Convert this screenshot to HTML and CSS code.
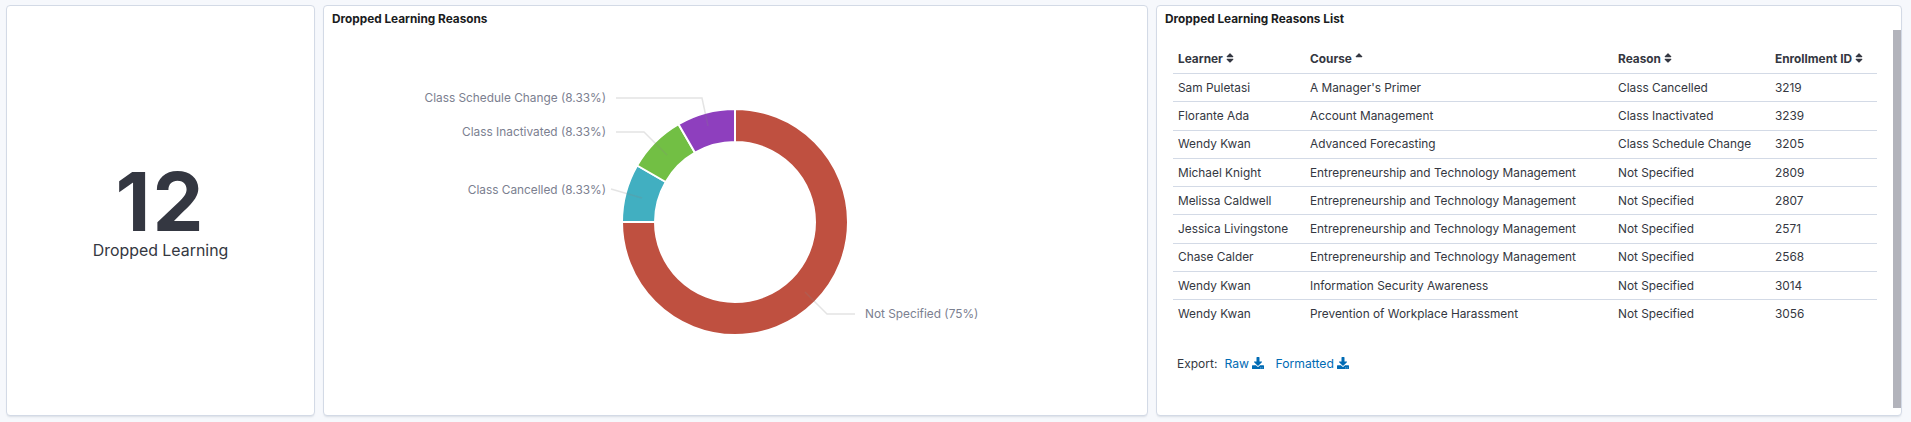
FILE: index.html
```html
<!DOCTYPE html>
<html lang="en">
<head>
    <meta charset="UTF-8">
    <title>Dropped Learning</title>
    <link rel="stylesheet" href="styles.css">
</head>
<body>
    <svg class="defs" width="0" height="0">
        <symbol id="sort" viewBox="0 0 320 512"><path d="M41 288h238c21.4 0 32.1 25.9 17 41L177 448c-9.4 9.4-24.6 9.4-33.9 0L24 329c-15.1-15.1-4.4-41 17-41zm255-105L177 64c-9.4-9.4-24.6-9.4-33.9 0L24 183c-15.1 15.1-4.4 41 17 41h238c21.4 0 32.1-25.9 17-41z"/></symbol>
        <symbol id="sort-up" viewBox="0 0 320 512"><path d="M296 183L177 64c-9.4-9.4-24.6-9.4-33.9 0L24 183c-15.1 15.1-4.4 41 17 41h238c21.4 0 32.1-25.9 17-41z"/></symbol>
        <symbol id="download" viewBox="0 0 512 512"><path d="M216 0h80c13.3 0 24 10.7 24 24v168h87.7c17.8 0 26.7 21.5 14.1 34.1L269.7 378.3c-7.5 7.5-19.8 7.5-27.3 0L90.1 226.1c-12.6-12.6-3.7-34.1 14.1-34.1H192V24c0-13.3 10.7-24 24-24zm296 376v112c0 13.3-10.7 24-24 24H24c-13.3 0-24-10.7-24-24V376c0-13.3 10.7-24 24-24h146.7l49 49c20.1 20.1 52.5 20.1 72.6 0l49-49H488c13.3 0 24 10.7 24 24zm-124 88c0-11-9-20-20-20s-20 9-20 20 9 20 20 20 20-9 20-20zm64 0c0-11-9-20-20-20s-20 9-20 20 9 20 20 20 20-9 20-20z"/></symbol>
    </svg>

    <div class="dashboard">
        <section class="panel panel-metric">
            <div class="metric-value">12</div>
            <div class="metric-label">Dropped Learning</div>
        </section>

        <section class="panel panel-chart">
            <h2 class="panel-title">Dropped Learning Reasons</h2>
            <!-- viewBox uses page coordinates so the slices are easy to check -->
            <svg class="donut" viewBox="324 30 823 384">
                <path class="slice-red" d="M735 109A113 113 0 1 1 622 222L655 222A80 80 0 1 0 735 142Z"/>
                <path class="slice-teal" d="M622 222A113 113 0 0 1 637.14 165.5L665.72 182A80 80 0 0 0 655 222Z"/>
                <path class="slice-green" d="M637.14 165.5A113 113 0 0 1 678.5 124.14L695 152.72A80 80 0 0 0 665.72 182Z"/>
                <path class="slice-purple" d="M678.5 124.14A113 113 0 0 1 735 109L735 142A80 80 0 0 0 695 152.72Z"/>
                <polyline class="leader" points="616,98 702,98 708,126"/>
                <polyline class="leader" points="616,132 644,132 667,155"/>
                <polyline class="leader" points="611,189 642,198"/>
                <polyline class="leader" points="855,314 827,314 805,292"/>
                <text class="label" x="606" y="102" text-anchor="end">Class Schedule Change (8.33%)</text>
                <text class="label" x="606" y="136" text-anchor="end">Class Inactivated (8.33%)</text>
                <text class="label" x="606" y="194" text-anchor="end">Class Cancelled (8.33%)</text>
                <text class="label" x="865" y="318">Not Specified (75%)</text>
            </svg>
        </section>

        <section class="panel panel-list">
            <h2 class="panel-title">Dropped Learning Reasons List</h2>
            <div class="list-wrap">
                <div class="list-body">
                    <table class="reasons">
                        <colgroup>
                            <col class="col-learner">
                            <col class="col-course">
                            <col class="col-reason">
                            <col class="col-id">
                        </colgroup>
                        <thead>
                            <tr>
                                <th>Learner <svg class="sort-icon"><use href="#sort"/></svg></th>
                                <th>Course <svg class="sort-icon"><use href="#sort-up"/></svg></th>
                                <th>Reason <svg class="sort-icon"><use href="#sort"/></svg></th>
                                <th>Enrollment ID <svg class="sort-icon"><use href="#sort"/></svg></th>
                            </tr>
                        </thead>
                        <tbody>
                            <tr><td>Sam Puletasi</td><td>A Manager's Primer</td><td>Class Cancelled</td><td>3219</td></tr>
                            <tr><td>Florante Ada</td><td>Account Management</td><td>Class Inactivated</td><td>3239</td></tr>
                            <tr><td>Wendy Kwan</td><td>Advanced Forecasting</td><td>Class Schedule Change</td><td>3205</td></tr>
                            <tr><td>Michael Knight</td><td>Entrepreneurship and Technology Management</td><td>Not Specified</td><td>2809</td></tr>
                            <tr><td>Melissa Caldwell</td><td>Entrepreneurship and Technology Management</td><td>Not Specified</td><td>2807</td></tr>
                            <tr><td>Jessica Livingstone</td><td>Entrepreneurship and Technology Management</td><td>Not Specified</td><td>2571</td></tr>
                            <tr><td>Chase Calder</td><td>Entrepreneurship and Technology Management</td><td>Not Specified</td><td>2568</td></tr>
                            <tr><td>Wendy Kwan</td><td>Information Security Awareness</td><td>Not Specified</td><td>3014</td></tr>
                            <tr><td>Wendy Kwan</td><td>Prevention of Workplace Harassment</td><td>Not Specified</td><td>3056</td></tr>
                        </tbody>
                    </table>
                    <div class="export">
                        <span class="export-label">Export:</span>
                        <a class="export-link">Raw <svg class="download-icon"><use href="#download"/></svg></a>
                        <a class="export-link">Formatted <svg class="download-icon"><use href="#download"/></svg></a>
                    </div>
                </div>
                <div class="scrollbar"></div>
            </div>
        </section>
    </div>
</body>
</html>
```

FILE: styles.css
```css
body {
    margin: 0;
    background-color: #f6f8fc;
    color: #343741;
    font-family: Inter, "Noto Sans", sans-serif;
}
.defs {
    position: absolute;
}
.dashboard {
    display: flex;
    gap: 8px;
    height: 411px;
    padding: 5px 9px 6px 6px;
}
.panel {
    flex: none;
    box-sizing: border-box;
    background-color: white;
    border: 1px solid #d3dae6;
    border-radius: 4px;
    box-shadow: 0 2px 2px -1px rgba(152, 162, 179, 0.3);
    overflow: hidden;
}
.panel-title {
    margin: 0;
    padding: 5px 8px 3px;
    height: 16px;
    line-height: 16px;
    font-size: 11.8px;
    font-weight: 700;
    color: #1a1c21;
}

/* metric */
.panel-metric {
    width: 309px;
    display: flex;
    flex-direction: column;
    align-items: center;
    justify-content: center;
}
.metric-value {
    font-size: 81px;
    line-height: 78px;
    letter-spacing: 2px;
    font-weight: 700;
    margin-top: 3px;
}
.metric-label {
    font-size: 15.9px;
    line-height: 20px;
}

/* donut */
.panel-chart {
    width: 825px;
}
.donut {
    display: block;
    width: 823px;
    height: 384px;
}
.donut path {
    stroke: white;
    stroke-width: 2;
}
.slice-red { fill: #bf5040; }
.slice-teal { fill: #41afc1; }
.slice-green { fill: #72bf44; }
.slice-purple { fill: #8e3fbe; }
.leader {
    fill: none;
    stroke: rgba(130, 130, 130, 0.22);
    stroke-width: 1.5;
}
.label {
    font-size: 11.85px;
    fill: #7b8090;
}

/* list */
.panel-list {
    width: 746px;
}
.list-wrap {
    display: flex;
    height: 385px;
}
.list-body {
    flex: 1;
    padding: 15px 15px 0 16px;
}
.scrollbar {
    width: 8px;
    height: 378px;
    background-color: #b2b3bb;
}
.reasons {
    width: 704px;
    table-layout: fixed;
    border-collapse: collapse;
    font-size: 11.85px;
}
.col-learner { width: 132px; }
.col-course { width: 308px; }
.col-reason { width: 157px; }
.col-id { width: 107px; }
.reasons th {
    text-align: left;
    font-weight: 700;
    height: 28px;
    padding: 0 5px;
    border-bottom: 1px solid #d3dae6;
}
.reasons td {
    height: 27.3px;
    padding: 0 5px;
    border-bottom: 1px solid #d3dae6;
}
.reasons tbody tr:last-child td {
    border-bottom: none;
}
.sort-icon {
    width: 8px;
    height: 12px;
    fill: #343741;
    vertical-align: -1px;
}
.export {
    display: flex;
    align-items: center;
    font-size: 12px;
    margin-top: 28px;
    padding-left: 4px;
}
.export-label {
    margin-right: 7px;
}
.export-link {
    color: #006bb4;
    font-size: 12.2px;
    margin-right: 11px;
}
.download-icon {
    width: 12px;
    height: 12px;
    fill: #006bb4;
    vertical-align: -1px;
}
```
